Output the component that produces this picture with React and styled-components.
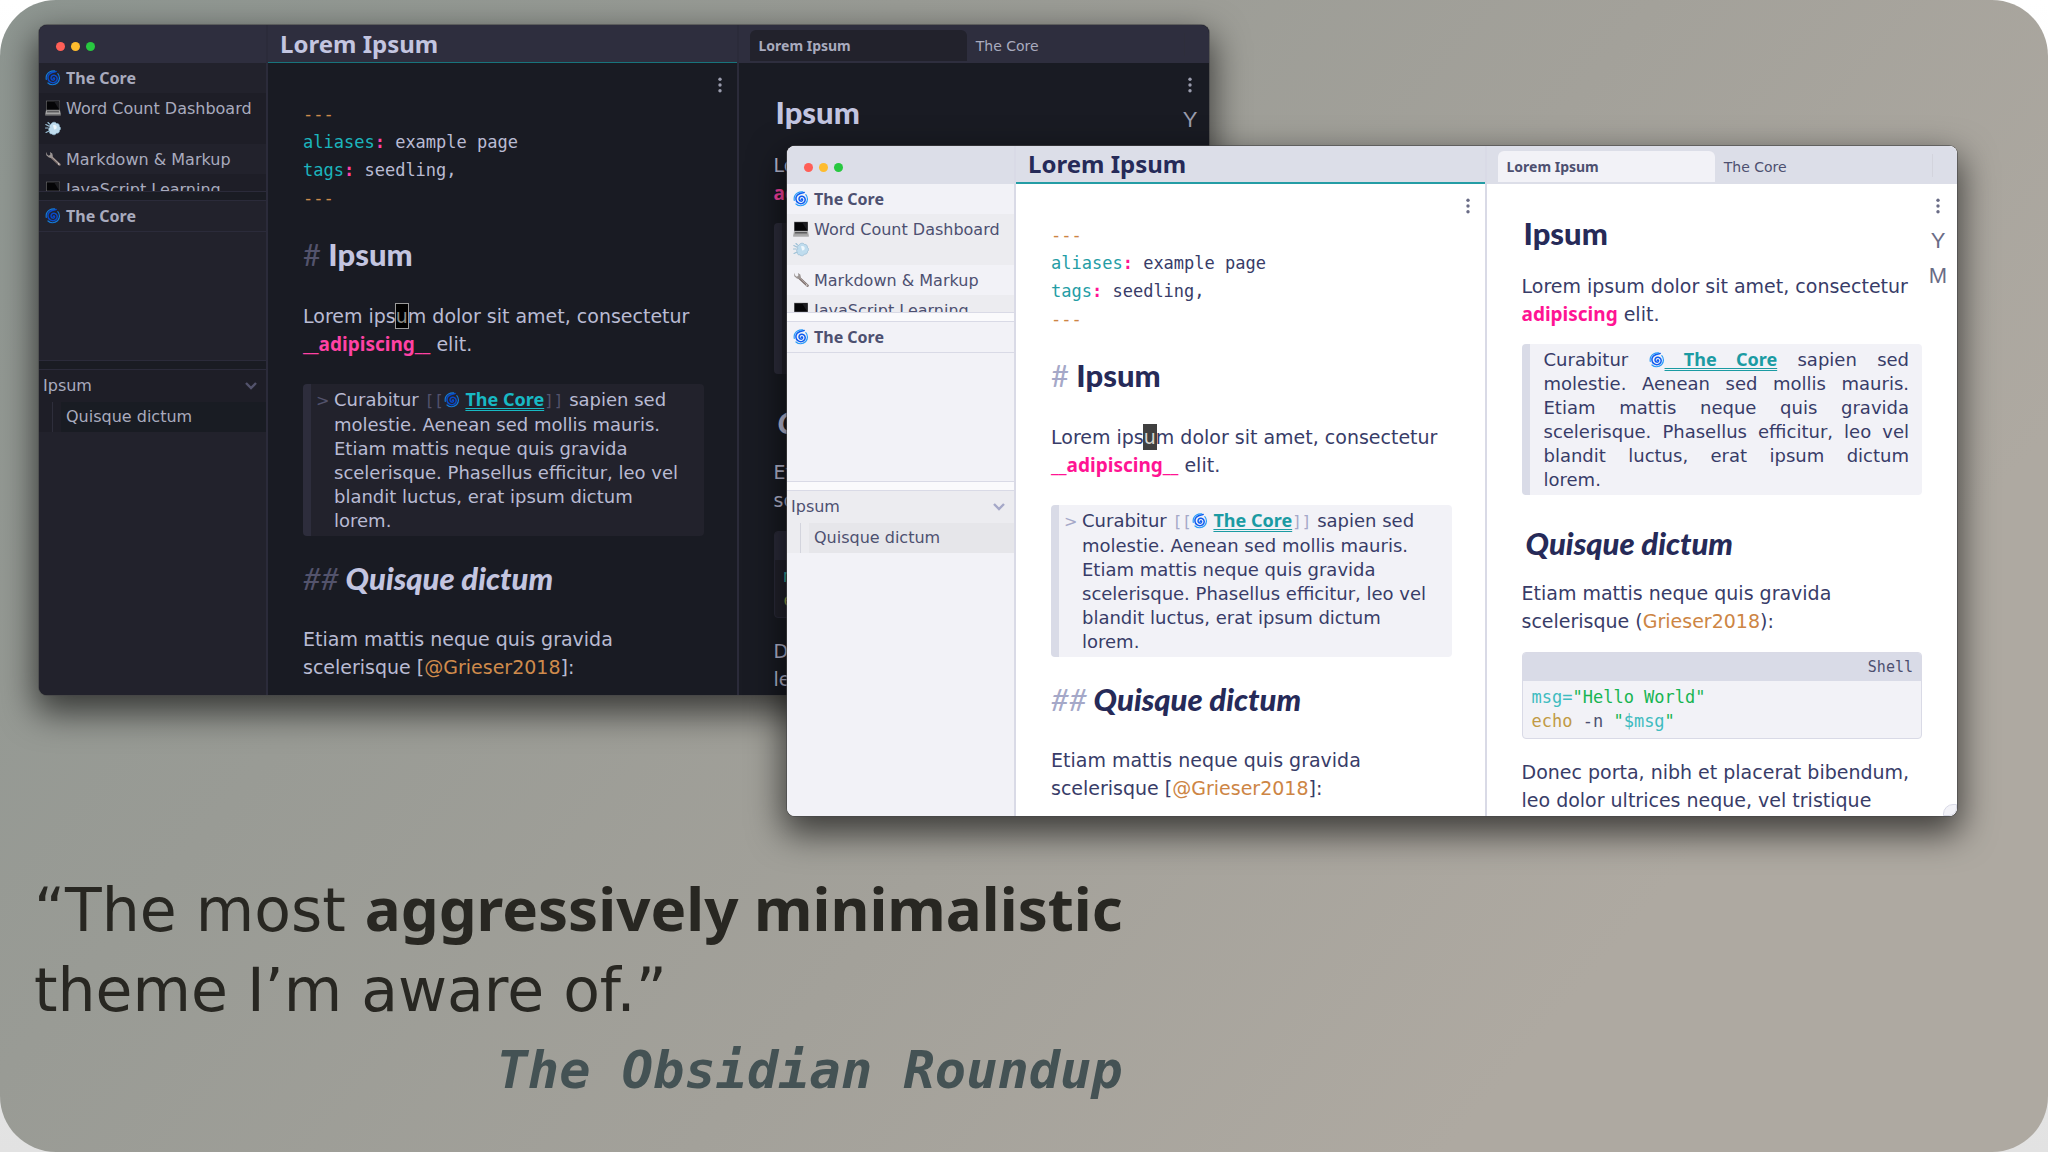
import React, { useState } from "react";
import styled, { createGlobalStyle, ThemeProvider } from "styled-components";

const sans = '"DejaVu Sans", "Noto Sans", sans-serif';
const strong = '"Noto Sans", "Open Sans", sans-serif';
const mono = '"DejaVu Sans Mono", "Liberation Mono", monospace';
const display = 'Lato, "Noto Sans", sans-serif';

const dark = {
  header: "#2e2e3e",
  line: "#2b2b3a",
  side: "#22222c",
  sideAlt: "#1e1e27",
  sideText: "#a9abbe",
  gap: "#1a1c23",
  item: "#191c23",
  guide: "#2e2e3b",
  page: "#191b23",
  text: "#b9bbd3",
  heading: "#c3c5e0",
  tab: "#22222c",
  accent: "#18747c",
  accentWidth: "1px",
  key: "#1cb5bd",
  link: "#18b9c4",
  pink: "#ff42a4",
  orange: "#cf8b4c",
  faint: "#53536c",
  quote: "#22222c",
  bar: "#2d2d3c",
  cursor: "#000000",
  cursorText: "#8c8c86",
  cursorEdge: "#9a9a9a",
  codeHead: "#2b2b3a",
  codeText: "#a9abbe",
  green: "#1fbf5f",
  teal: "#35b5ac",
  gold: "#a3a447",
  icon: "#9a9cad",
  swirl: "#0a49c9",
  swirlLight: "#1479d6",
};

const light = {
  header: "#dcdee8",
  line: "#d9dae6",
  side: "#f2f2f7",
  sideAlt: "#ececf0",
  sideText: "#4d5070",
  gap: "#fafafc",
  item: "#e6e6ea",
  guide: "#d3d4dd",
  page: "#ffffff",
  text: "#383c68",
  heading: "#262a58",
  tab: "#f2f2f7",
  accent: "#249da5",
  accentWidth: "2px",
  key: "#249da5",
  link: "#1b9ba3",
  pink: "#ff1493",
  orange: "#cd8544",
  faint: "#a5a8c8",
  quote: "#f2f2f7",
  bar: "#d9dbe7",
  cursor: "#404040",
  cursorText: "#d6d6d0",
  cursorEdge: "#404040",
  codeHead: "#d9dbe7",
  codeText: "#4d5070",
  green: "#18b552",
  teal: "#3fbcc0",
  gold: "#c19a45",
  icon: "#6a6c86",
  swirl: "#0f5cf0",
  swirlLight: "#2b9cf8",
};

const GlobalStyle = createGlobalStyle`
  * { box-sizing: border-box; }
  body { margin: 0; background: linear-gradient(#ffffff, #e2e2e2); }
  button { border: 0; background: none; padding: 0; font: inherit; color: inherit; cursor: pointer; }
  h1, h2, p, ul, blockquote, pre, figure { margin: 0; padding: 0; }
  ul { list-style: none; }
`;

const Desktop = styled.main`
  position: relative;
  display: flex;
  flex-direction: column;
  justify-content: flex-end;
  min-height: 100vh;
  padding: 0 34px 42px;
  border-radius: 56px;
  overflow: hidden;
  background: linear-gradient(130deg, #8e9691 0%, #999b95 30%, #a3a19a 55%, #aea9a1 80%);
`;

const Window = styled.section`
  position: absolute;
  top: ${(p) => p.$top};
  left: ${(p) => p.$left};
  width: calc(50vw + 146px);
  height: calc(50vh + 94px);
  display: grid;
  grid-template-columns: 229px minmax(0, 1fr) minmax(0, 1fr);
  border-radius: 8px;
  overflow: hidden;
  background: ${(p) => p.theme.page};
  color: ${(p) => p.theme.text};
  font: 19px/28px ${sans};
  box-shadow: 0 0 0 1px rgba(70, 70, 72, 0.6), 0 14px 34px 4px rgba(0, 0, 0, 0.62);
  &::after {
    content: "";
    position: absolute;
    right: 0;
    bottom: 0;
    width: 12px;
    height: 10px;
    border: 1px solid ${(p) => p.theme.line};
    border-radius: 10px 0 8px 0;
    background: ${(p) => p.theme.side};
  }
`;

const Column = styled.div`
  display: flex;
  flex-direction: column;
  min-width: 0;
  min-height: 0;
  border-right: ${(p) => (p.$last ? "0" : "2px")} solid ${(p) => p.theme.line};
  background: ${(p) => (p.$side ? p.theme.side : p.theme.page)};
`;

const TopBar = styled.header`
  flex: none;
  display: flex;
  align-items: center;
  height: 38px;
  background: ${(p) => p.theme.header};
  border-bottom: ${(p) => (p.$active ? p.theme.accentWidth : "0")} solid ${(p) => p.theme.accent};
`;

const Lights = styled.div`
  display: flex;
  gap: 6px;
  padding: 4px 0 0 17px;
`;

const Light = styled.button`
  width: 9px;
  height: 9px;
  border-radius: 50%;
  && { background: ${(p) => p.$color}; }
`;

const Title = styled.h1`
  && { padding-left: 12px; }
  font: 700 24px/34px ${strong};
  color: ${(p) => p.theme.heading};
`;

const Tabs = styled.div`
  flex: 1;
  display: flex;
  height: 100%;
  align-items: stretch;
  padding: 5px 24px 2px 11px;
`;

const Tab = styled.button`
  && {
    flex: 1;
    padding: 0 9px;
    border-radius: 6px 6px 0 0;
    text-align: left;
    font: ${(p) => (p.$active ? `700 14px/28px ${strong}` : `14px/28px ${sans}`)};
    color: ${(p) => p.theme.sideText};
    background: ${(p) => (p.$active ? p.theme.tab : "transparent")};
  }
`;

const TabRule = styled.span`
  width: 1px;
  margin: 3px 0 5px;
  background: ${(p) => p.theme.guide};
`;

const List = styled.ul`
  flex: none;
  height: ${(p) => p.$height};
  overflow: hidden;
  border-bottom: 1px solid ${(p) => p.theme.line};
`;

const FileRow = styled.li`
  padding: 5px 8px 4px 6px;
  font: ${(p) => (p.$strong ? `700 16px/21px ${strong}` : `16px/21px ${sans}`)};
  color: ${(p) => p.theme.sideText};
  background: ${(p) => (p.$alt ? p.theme.sideAlt : "transparent")};
  border-bottom: ${(p) => (p.$ruled ? "1px" : "0")} solid ${(p) => p.theme.line};
  svg { margin-right: 5px; }
`;

const Gap = styled.div`
  flex: none;
  height: 9px;
  background: ${(p) => p.theme.gap};
  border-bottom: 1px solid ${(p) => p.theme.line};
`;

const Outline = styled.div`
  background: ${(p) => p.theme.sideAlt};
  color: ${(p) => p.theme.sideText};
  font-size: 16px;
`;

const OutlineHead = styled.button`
  && {
    display: flex;
    align-items: center;
    justify-content: space-between;
    width: 100%;
    padding: 0 8px 0 4px;
    font: 16px/32px ${sans};
    color: ${(p) => p.theme.sideText};
  }
`;

const OutlineItem = styled.div`
  margin-left: 13px;
  padding-left: 8px;
  border-left: 1px solid ${(p) => p.theme.guide};
  line-height: 30px;
  span {
    display: block;
    padding-left: 5px;
    background: ${(p) => p.theme.item};
  }
`;

const Page = styled.article`
  position: relative;
  flex: 1;
  min-height: 0;
  overflow: hidden;
  padding: ${(p) => (p.$preview ? "29px 35px 0" : "37px 33px 0 35px")};
`;

const Rail = styled.div`
  position: absolute;
  top: 8px;
  right: ${(p) => (p.$preview ? "7px" : "5px")};
  width: 24px;
  display: flex;
  flex-direction: column;
  align-items: center;
  gap: 7px;
  color: ${(p) => p.theme.icon};
`;

const RailButton = styled.button`
  && {
    display: flex;
    align-items: center;
    justify-content: center;
    height: 28px;
    font: 22px/28px "Liberation Sans", sans-serif;
  }
`;

const Matter = styled.pre`
  font: 17px/28px ${mono};
  b { font-weight: 400; color: ${(p) => p.theme.key}; }
  i { font-style: normal; font-weight: 700; color: ${(p) => p.theme.pink}; }
  s { text-decoration: none; color: ${(p) => p.theme.orange}; }
`;

const Heading = styled.h2`
  && { padding: ${(p) => p.$pad}; }
  font: ${(p) => (p.$italic ? "italic " : "")}900 31px/40px ${display};
  color: ${(p) => p.theme.heading};
`;

const Mark = styled.span`
  font-weight: 400;
  color: ${(p) => p.theme.faint};
`;

const Bracket = styled.span`
  font: 16px/24px ${mono};
  color: ${(p) => p.theme.faint};
`;

const Para = styled.p`
  font-size: 19px;
  line-height: 28px;
`;

const Strong = styled.strong`
  font-family: ${strong};
  color: ${(p) => p.theme.pink};
`;

const Cursor = styled.span`
  padding: 1px 0;
  background: ${(p) => p.theme.cursor};
  color: ${(p) => p.theme.cursorText};
  outline: 1px solid ${(p) => p.theme.cursorEdge};
`;

const Quote = styled.blockquote`
  && {
    margin: ${(p) => (p.$preview ? "16px 0" : "26px 0 22px")};
    padding: ${(p) => (p.$preview ? "3px 13px 3px 14px" : "3px 0 3px 23px")};
  }
  border-left: 8px solid ${(p) => p.theme.bar};
  border-radius: 4px;
  background: ${(p) => p.theme.quote};
  font-size: 18px;
  line-height: 24px;
`;

const Line = styled.span`
  display: block;
  text-align-last: ${(p) => (p.$spread ? "justify" : "left")};
`;

const Hang = styled.span`
  display: inline-block;
  width: 18px;
  margin-left: -18px;
  font-size: 16px;
  color: ${(p) => p.theme.faint};
`;

const Link = styled.a`
  font: 700 18px/24px ${strong};
  color: ${(p) => p.theme.link};
  text-decoration: underline double 1px;
  text-underline-offset: 2px;
`;

const Cite = styled.a`
  color: ${(p) => p.theme.orange};
  text-decoration: none;
`;

const Code = styled.figure`
  && { margin: 17px 0 19px; }
  border: 1px solid ${(p) => p.theme.line};
  border-radius: 4px;
  overflow: hidden;
  background: ${(p) => p.theme.quote};
  figcaption {
    padding-right: 8px;
    text-align: right;
    font: 15px/28px ${mono};
    color: ${(p) => p.theme.codeText};
    background: ${(p) => p.theme.codeHead};
  }
  pre {
    padding: 4px 9px 5px;
    font: 17px/24px ${mono};
  }
`;

const Tok = styled.span`
  color: ${(p) => p.theme[p.$c]};
`;

const Blurb = styled.figure`
  width: fit-content;
  color: #282722;
  blockquote { font: 60px/80px ${sans}; }
  strong { font-family: ${strong}; }
  figcaption {
    text-align: right;
    font: italic 700 52px/80px ${mono};
    color: #445254;
  }
`;

const Glyph = styled.svg`
  width: 16px;
  height: 16px;
  vertical-align: -2px;
`;

const Swirl = styled(Glyph)`
  fill: none;
  stroke-linecap: round;
  .arm { stroke: ${(p) => p.theme.swirl}; stroke-width: 1.5; }
  .rim { stroke: ${(p) => p.theme.swirlLight}; stroke-width: 1.2; }
`;

const Cyclone = () => (
  <Swirl viewBox="0 0 16 16" role="img" aria-label="cyclone">
    <path
      className="arm"
      d="M8.200 8.300c.5-.9 1.700-.2 1.300.9-.6 1.400-3 1.200-3.400-.5C5.600 6.500 7.300 4.900 9.200 5.200c2.500.4 3.700 3 2.600 5.200-1.300 2.500-4.700 3-6.900 1.300C2.500 9.800 2.300 6.400 4.200 4.300 5.900 2.400 8.300 1.700 11.200 1.400"
    />
    <path
      className="rim"
      d="M12.800 3.600c2.200 2.500 2.300 6.500-.3 9.200-2.600 2.500-6.900 2.600-9.500.2M1.300 9.500C.8 6.500 2 3.500 4.500 2 6 1.100 7.800.8 9.600.9"
    />
  </Swirl>
);

const Laptop = () => (
  <Glyph viewBox="0 0 16 16" role="img" aria-label="laptop">
    <path d="M1 .8h14v9.400H1z" fill="#77777a" />
    <path d="M1.600 1.300h12.800v8.400H1.600z" fill="#050507" />
    <path d="M9 1.300h5.400v8.400z" fill="#1c1c20" />
    <path d="M1 10.200h14l.8 4.200H.2z" fill="#a4a4a4" />
    <path d="M2.200 10.900h11.600l.3 1.700H1.900z" fill="#5c5c5e" />
    <path d="M.2 14.400h15.600v1H.2z" fill="#8b8b8b" />
  </Glyph>
);

const Wind = () => (
  <Glyph viewBox="0 0 16 16" role="img" aria-label="dash">
    <path
      d="M6 3.200C7 .8 10.500.6 11.500 2.500c2-.4 3.300 1.300 2.800 2.800 1.700 1 1.700 3.300.2 4.200.2 1.900-1.400 3-3 2.600-.8 2-3.400 2.300-4.600.8-1.700.3-2.900-1-2.500-2.500C3.200 9 3.400 7.200 4.800 6.600 4 5 4.700 3.600 6 3.200z"
      fill="#bfdcee"
      stroke="#8fb6cf"
      strokeWidth=".6"
    />
    <path d="M8 4.500c1.500-1 3.500-.2 3.700 1.500s-1.200 2.800-2.500 2.500" fill="#eef7fc" />
    <path
      d="M.8 3.500l3 1.600M.5 7h2.700M1 11.500l2.600-1.300M3 1.500l1.500 1.500"
      stroke="#9cc0d6"
      strokeWidth="1.1"
      strokeLinecap="round"
    />
  </Glyph>
);

const Wrench = () => (
  <Glyph viewBox="0 0 16 16" role="img" aria-label="wrench">
    <path d="M6.200 5.900l8.300 7.700" stroke="#7d6f6c" strokeWidth="2.6" strokeLinecap="round" />
    <path d="M6 5.300l8.600 8" stroke="#b4abaa" strokeWidth=".9" strokeLinecap="round" />
    <path d="M1 .8l.3 3.500 2.600 2.300 2.500.3L7.900 5.200l-.6-2.600L4.900.9l.5 2.600-1.500 1.200-1.500-1z" fill="#9b9493" />
    <circle cx="13.600" cy="13" r=".7" fill="#e3dfde" />
  </Glyph>
);

const Dots = () => (
  <svg width="6" height="16" viewBox="0 0 6 16" fill="currentColor" aria-hidden="true">
    <circle cx="3" cy="2.300" r="1.700" />
    <circle cx="3" cy="8" r="1.700" />
    <circle cx="3" cy="13.700" r="1.700" />
  </svg>
);

const Chevron = styled.svg`
  width: 14px;
  height: 10px;
  fill: none;
  stroke: ${(p) => p.theme.faint};
  stroke-width: 2.4;
`;

function Sidebar() {
  const [open, setOpen] = useState(true);
  return (
    <Column as="nav" $side>
      <TopBar>
        <Lights>
          <Light $color="#ff5f57" aria-label="Close" />
          <Light $color="#febc2e" aria-label="Minimise" />
          <Light $color="#28c840" aria-label="Zoom" />
        </Lights>
      </TopBar>
      <List $height="129px">
        <FileRow $strong><Cyclone />The Core</FileRow>
        <FileRow $alt><Laptop />Word Count Dashboard <Wind /></FileRow>
        <FileRow><Wrench />Markdown &amp; Markup</FileRow>
        <FileRow $alt><Laptop />JavaScript Learning</FileRow>
      </List>
      <Gap />
      <List $height="160px">
        <FileRow $strong $ruled><Cyclone />The Core</FileRow>
      </List>
      <Gap />
      <Outline>
        <OutlineHead aria-expanded={open} onClick={() => setOpen(!open)}>
          Ipsum
          <Chevron viewBox="0 0 14 10"><path d="M2 2l5 5 5-5" /></Chevron>
        </OutlineHead>
        {open && <OutlineItem><span>Quisque dictum</span></OutlineItem>}
      </Outline>
    </Column>
  );
}

function Editor() {
  return (
    <Column>
      <TopBar $active><Title>Lorem Ipsum</Title></TopBar>
      <Page>
        <Rail><RailButton aria-label="More options"><Dots /></RailButton></Rail>
        <Matter>
          <s>---</s>{"\n"}
          <b>aliases</b><i>:</i>{" example page\n"}
          <b>tags</b><i>:</i>{" seedling,\n"}
          <s>---</s>
        </Matter>
        <Heading $pad="22px 0 28px"><Mark>#</Mark> Ipsum</Heading>
        <Para>
          Lorem ips<Cursor>u</Cursor>m dolor sit amet, consectetur <Strong>__adipiscing__</Strong> elit.
        </Para>
        <Quote>
          <Line>
            <Hang>&gt;</Hang>Curabitur <Bracket>[[</Bracket><Cyclone /> <Link href="#core">The Core</Link>
            <Bracket>]]</Bracket> sapien sed
          </Line>
          <Line>molestie. Aenean sed mollis mauris.</Line>
          <Line>Etiam mattis neque quis gravida</Line>
          <Line>scelerisque. Phasellus efficitur, leo vel</Line>
          <Line>blandit luctus, erat ipsum dictum</Line>
          <Line>lorem.</Line>
        </Quote>
        <Heading $italic $pad="0 0 27px"><Mark>##</Mark> Quisque dictum</Heading>
        <Para>
          Etiam mattis neque quis gravida<br />scelerisque [<Cite href="#grieser">@Grieser2018</Cite>]:
        </Para>
      </Page>
    </Column>
  );
}

function Preview() {
  return (
    <Column $last>
      <TopBar>
        <Tabs role="tablist">
          <Tab role="tab" aria-selected="true" $active>Lorem Ipsum</Tab>
          <Tab role="tab" aria-selected="false">The Core</Tab>
          <TabRule />
        </Tabs>
      </TopBar>
      <Page $preview>
        <Rail $preview>
          <RailButton aria-label="More options"><Dots /></RailButton>
          <RailButton>Y</RailButton>
          <RailButton>M</RailButton>
        </Rail>
        <Heading $pad="0 0 19px 2px">Ipsum</Heading>
        <Para>Lorem ipsum dolor sit amet, consectetur <Strong>adipiscing</Strong> elit.</Para>
        <Quote $preview>
          <Line $spread>Curabitur <Link href="#core"><Cyclone /> The Core</Link> sapien sed</Line>
          <Line $spread>molestie. Aenean sed mollis mauris.</Line>
          <Line $spread>Etiam mattis neque quis gravida</Line>
          <Line $spread>scelerisque. Phasellus efficitur, leo vel</Line>
          <Line $spread>blandit luctus, erat ipsum dictum</Line>
          <Line>lorem.</Line>
        </Quote>
        <Heading $italic $pad="12px 0 16px 4px">Quisque dictum</Heading>
        <Para>
          Etiam mattis neque quis gravida<br />scelerisque (<Cite href="#grieser">Grieser2018</Cite>):
        </Para>
        <Code>
          <figcaption>Shell</figcaption>
          <pre>
            <Tok $c="teal">msg=</Tok><Tok $c="green">"Hello World"</Tok>{"\n"}
            <Tok $c="gold">echo</Tok><Tok $c="codeText"> -n </Tok><Tok $c="green">"</Tok><Tok $c="teal">$msg</Tok><Tok $c="green">"</Tok>
          </pre>
        </Code>
        <Para>Donec porta, nibh et placerat bibendum, leo dolor ultrices neque, vel tristique</Para>
      </Page>
    </Column>
  );
}

function NoteWindow({ theme, top, left }) {
  return (
    <ThemeProvider theme={theme}>
      <Window $top={top} $left={left}>
        <Sidebar />
        <Editor />
        <Preview />
      </Window>
    </ThemeProvider>
  );
}

export default function App() {
  return (
    <>
      <GlobalStyle />
      <Desktop>
        <NoteWindow theme={dark} top="25px" left="39px" />
        <NoteWindow theme={light} top="146px" left="calc(50vw - 237px)" />
        <Blurb>
          <blockquote>
            “The most <strong>aggressively minimalistic</strong><br />theme I’m aware of.”
          </blockquote>
          <figcaption>The Obsidian Roundup</figcaption>
        </Blurb>
      </Desktop>
    </>
  );
}
